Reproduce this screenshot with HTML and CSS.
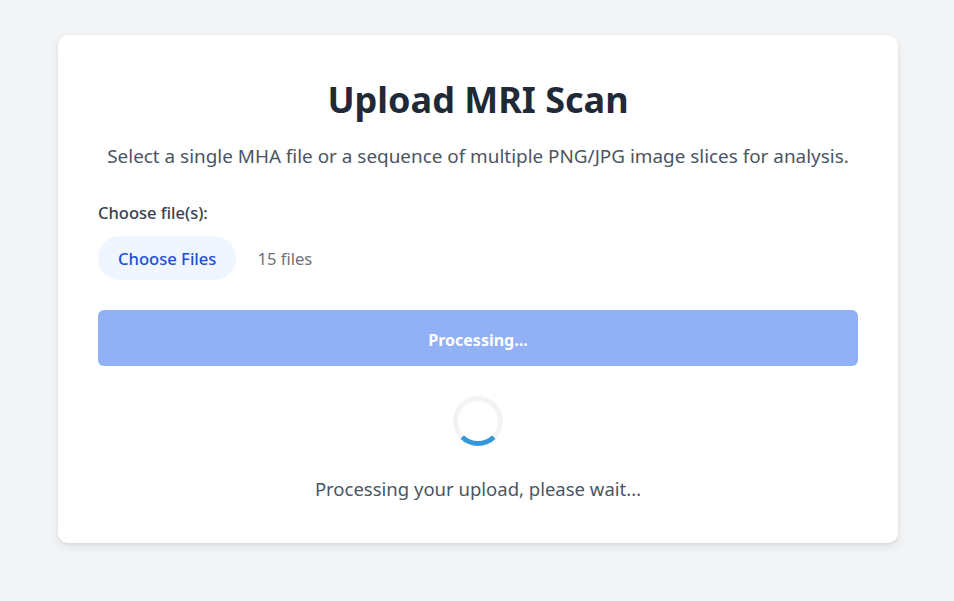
FILE: index.html
```html
<!DOCTYPE html>
<html lang="en">
<head>
<meta charset="utf-8">
<title>Upload MRI Scan</title>
<link rel="stylesheet" href="styles.css">
</head>
<body>
<main class="card">
  <h1 class="title">Upload MRI Scan</h1>
  <p class="subtitle">Select a single MHA file or a sequence of multiple PNG/JPG image slices for analysis.</p>
  <div class="field">
    <label class="label">Choose file(s):</label>
    <div class="file-row">
      <span class="file-btn">Choose Files</span>
      <span class="file-count">15 files</span>
    </div>
  </div>
  <button class="submit" disabled>Processing...</button>
  <div class="status">
    <div class="spinner"></div>
    <p class="status-text">Processing your upload, please wait...</p>
  </div>
</main>
</body>
</html>
```
FILE: styles.css
```css
* { box-sizing: border-box; }
html, body { margin: 0; padding: 0; }
body {
  background: #f3f4f6;
  font-family: "Noto Sans", "Open Sans", sans-serif;
  color: #1f2937;
  padding: 35px 56px 59px 58px;
}
.card {
  width: 840px;
  background: #fff;
  border-radius: 10px;
  box-shadow: 0 4px 10px rgba(0,0,0,0.08), 0 1px 3px rgba(0,0,0,0.06);
  padding: 40px 40px 40px;
}
.title {
  margin: 0;
  text-align: center;
  font-size: 36px;
  line-height: 50px;
  font-weight: 700;
  color: #1f2937;
}
.subtitle {
  margin: 17px 0 0;
  text-align: center;
  font-size: 18.9px;
  line-height: 28px;
  color: #4b5563;
}
.field { margin-top: 31px; }
.label {
  display: block;
  font-size: 16.5px;
  line-height: 24px;
  font-weight: 500;
  color: #374151;
}
.file-row {
  display: flex;
  align-items: center;
  margin-top: 11px;
}
.file-btn {
  display: inline-flex;
  align-items: center;
  height: 44px;
  padding: 0 20px;
  border-radius: 22px;
  background: #eff6ff;
  color: #1d4ed8;
  font-size: 16.6px;
  font-weight: 500;
}
.file-count {
  margin-left: 21px;
  font-size: 16.6px;
  color: #6b7280;
}
.submit {
  display: block;
  width: 100%;
  height: 56px;
  margin-top: 30px;
  padding: 3px 0 0;
  border: 0;
  border-radius: 6px;
  background: #92b0f5;
  color: #fff;
  font-family: inherit;
  font-size: 16px;
  font-weight: 700;
}
.status {
  display: flex;
  flex-direction: column;
  align-items: center;
  margin-top: 30px;
}
.spinner {
  width: 50px;
  height: 50px;
  border: 5px solid #f3f3f3;
  border-bottom-color: #3498db;
  border-radius: 50%;
}
.status-text {
  margin: 29px 0 0;
  font-size: 18.5px;
  line-height: 28px;
  color: #4b5563;
}
```
